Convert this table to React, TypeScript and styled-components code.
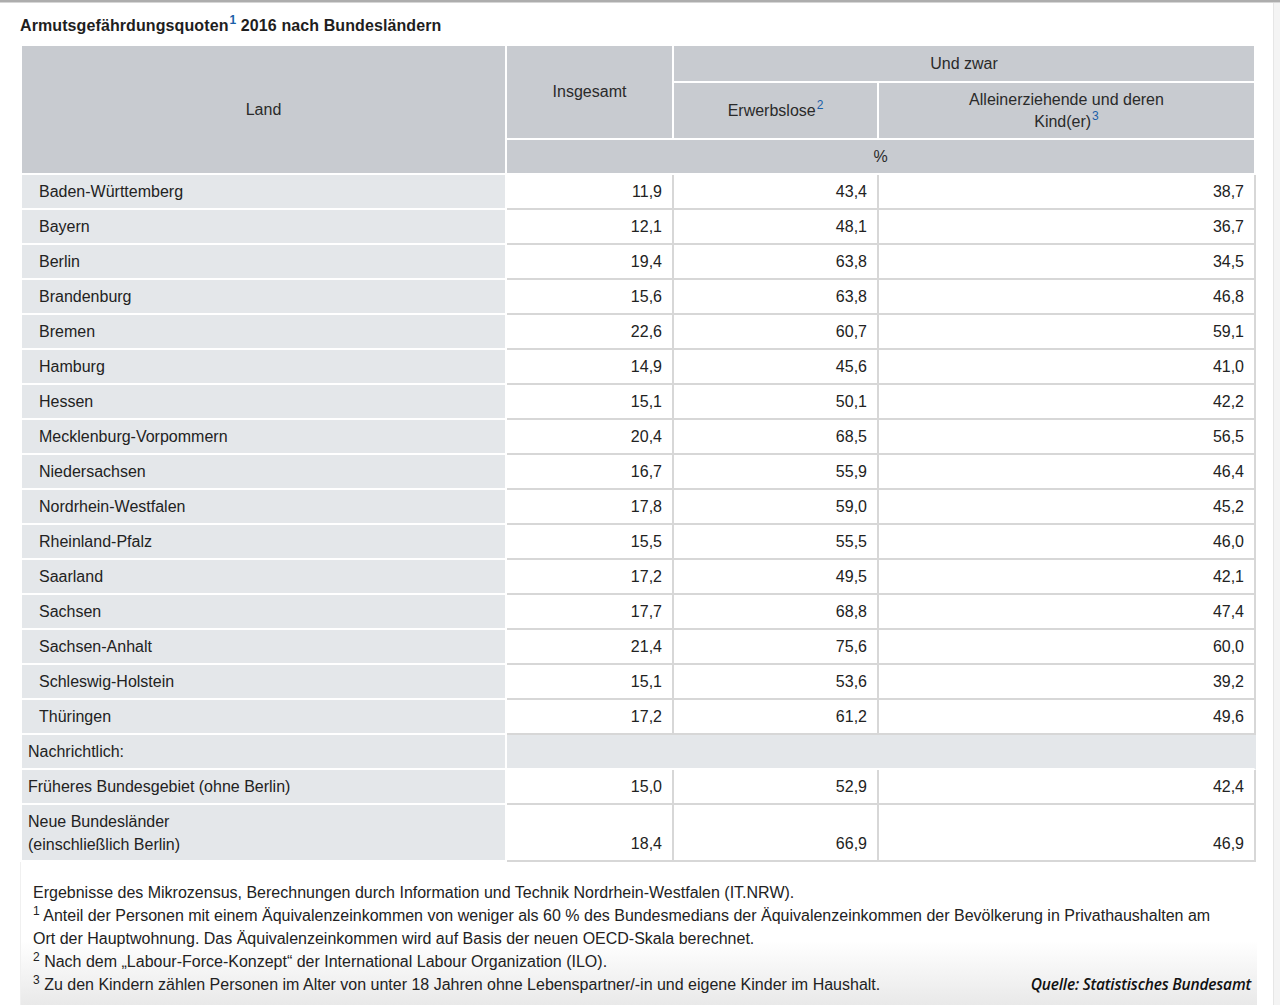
import React from "react";
import styled, { createGlobalStyle } from "styled-components";

const Global = createGlobalStyle`
  html, body { margin: 0; padding: 0; background: #fff; }
  body { font-family: "Liberation Sans", Arial, sans-serif; color: #222; }
`;

const Page = styled.div`
  display: flex;
  flex-direction: column;
  width: 1280px;
  height: 1005px;
  overflow: hidden;
`;

const TopBar = styled.div`
  height: 2px;
  background: #adadad;
  border-bottom: 1px solid #d6d6d6;
  flex: none;
`;

const Body = styled.div`
  display: flex;
  flex: 1;
  min-height: 0;
`;

const Main = styled.div`
  flex: 1;
  padding-left: 20px;
  display: flex;
  flex-direction: column;
`;

const ScrollStrip = styled.div`
  width: 6px;
  flex: none;
  background: #f4f4f4;
  border-left: 1px solid #e6e6e6;
`;

const Title = styled.h1`
  margin: 13px 0 10px 0;
  font-size: 16px;
  line-height: 20px;
  font-weight: bold;
  letter-spacing: 0.1px;
  color: #1e1e1e;
`;

const Note = styled.sup<{ $link?: boolean; $bold?: boolean }>`
  font-size: 12px;
  line-height: 0;
  vertical-align: ${(p) => (p.$link ? "7px" : "6px")};
  color: ${(p) => (p.$link ? "#1b5fa8" : "#222")};
  font-weight: ${(p) => (p.$bold ? "bold" : "normal")};
  margin-left: ${(p) => (p.$link ? "1px" : "0")};
`;

const Table = styled.table`
  margin-left: 2px;
  border-collapse: separate;
  border-spacing: 0;
  width: 1234px;
  table-layout: fixed;
  font-size: 16px;
`;

const Col = styled.col<{ $w: number }>`
  width: ${(p) => p.$w}px;
`;

const Th = styled.th<{ $h?: number }>`
  background: #c8cbd0;
  color: #2a2a2a;
  font-weight: normal;
  text-align: center;
  vertical-align: middle;
  border-right: 2px solid #fff;
  border-bottom: 2px solid #fff;
  padding: 0 10px;
  line-height: 22px;
  ${(p) => (p.$h ? `height: ${p.$h}px;` : "")}
`;

const LandCell = styled.td<{ $pad?: number; $h?: number }>`
  background: #e4e7ea;
  border-right: 2px solid #fff;
  border-bottom: 2px solid #fff;
  padding: 0 8px 0 ${(p) => p.$pad ?? 17}px;
  height: ${(p) => p.$h ?? 33}px;
  line-height: 23px;
  vertical-align: middle;
  color: #222;
`;

const WideCell = styled.td`
  background: #e4e7ea;
  border-right: 2px solid #e4e7ea;
  border-bottom: 2px solid #fff;
`;

const NumCell = styled.td<{ $bottom?: boolean }>`
  background: #fff;
  border-right: 2px solid #d7d7d7;
  border-bottom: 2px solid #d7d7d7;
  text-align: right;
  padding: 0 10px 0 0;
  vertical-align: ${(p) => (p.$bottom ? "bottom" : "middle")};
  line-height: 23px;
  color: #222;
  ${(p) => (p.$bottom ? "padding-bottom: 5px;" : "")}
`;

const Footer = styled.div`
  width: 1224px;
  flex: 1;
  padding: 19px 0 0 12px;
  border-left: 1px solid #f0f0f0;
  background: linear-gradient(to bottom, #ffffff 0%, #ffffff 55%, #e9e9e9 100%);
  font-size: 16px;
  line-height: 23px;
  color: #222;
`;

const FootLine = styled.div`
  white-space: nowrap;
`;

const LastLine = styled.div`
  display: flex;
  justify-content: space-between;
  align-items: baseline;
  padding-right: 6px;
`;

const Source = styled.span`
  font-family: "Open Sans", sans-serif;
  font-style: italic;
  font-weight: 600;
  font-size: 15.5px;
  letter-spacing: -0.2px;
  color: #111;
`;

type Row = [string, string, string, string];

const rows: Row[] = [
  ["Baden-Württemberg", "11,9", "43,4", "38,7"],
  ["Bayern", "12,1", "48,1", "36,7"],
  ["Berlin", "19,4", "63,8", "34,5"],
  ["Brandenburg", "15,6", "63,8", "46,8"],
  ["Bremen", "22,6", "60,7", "59,1"],
  ["Hamburg", "14,9", "45,6", "41,0"],
  ["Hessen", "15,1", "50,1", "42,2"],
  ["Mecklenburg-Vorpommern", "20,4", "68,5", "56,5"],
  ["Niedersachsen", "16,7", "55,9", "46,4"],
  ["Nordrhein-Westfalen", "17,8", "59,0", "45,2"],
  ["Rheinland-Pfalz", "15,5", "55,5", "46,0"],
  ["Saarland", "17,2", "49,5", "42,1"],
  ["Sachsen", "17,7", "68,8", "47,4"],
  ["Sachsen-Anhalt", "21,4", "75,6", "60,0"],
  ["Schleswig-Holstein", "15,1", "53,6", "39,2"],
  ["Thüringen", "17,2", "61,2", "49,6"],
];

export default function App() {
  return (
    <Page>
      <Global />
      <TopBar />
      <Body>
        <Main>
          <Title>
            Armutsgefährdungsquoten<Note $link $bold>1</Note> 2016 nach Bundesländern
          </Title>
          <Table>
            <colgroup>
              <Col $w={485} />
              <Col $w={167} />
              <Col $w={205} />
              <Col $w={377} />
            </colgroup>
            <thead>
              <tr>
                <Th rowSpan={3}>Land</Th>
                <Th rowSpan={2}>Insgesamt</Th>
                <Th colSpan={2} $h={35}>
                  Und zwar
                </Th>
              </tr>
              <tr>
                <Th $h={55}>
                  Erwerbslose<Note $link>2</Note>
                </Th>
                <Th $h={55}>
                  Alleinerziehende und deren
                  <br />
                  Kind(er)<Note $link>3</Note>
                </Th>
              </tr>
              <tr>
                <Th colSpan={3} $h={33}>
                  %
                </Th>
              </tr>
            </thead>
            <tbody>
              {rows.map((r) => (
                <tr key={r[0]}>
                  <LandCell>{r[0]}</LandCell>
                  <NumCell>{r[1]}</NumCell>
                  <NumCell>{r[2]}</NumCell>
                  <NumCell>{r[3]}</NumCell>
                </tr>
              ))}
              <tr>
                <LandCell $pad={6}>Nachrichtlich:</LandCell>
                <WideCell colSpan={3} />
              </tr>
              <tr>
                <LandCell $pad={6}>Früheres Bundesgebiet (ohne Berlin)</LandCell>
                <NumCell>15,0</NumCell>
                <NumCell>52,9</NumCell>
                <NumCell>42,4</NumCell>
              </tr>
              <tr>
                <LandCell $pad={6} $h={55}>
                  Neue Bundesländer
                  <br />
                  (einschließlich Berlin)
                </LandCell>
                <NumCell $bottom>18,4</NumCell>
                <NumCell $bottom>66,9</NumCell>
                <NumCell $bottom>46,9</NumCell>
              </tr>
            </tbody>
          </Table>
          <Footer>
            <FootLine>
              Ergebnisse des Mikrozensus, Berechnungen durch Information und Technik Nordrhein-Westfalen (IT.NRW).
            </FootLine>
            <FootLine>
              <Note>1</Note> Anteil der Personen mit einem Äquivalenzeinkommen von weniger als 60 % des Bundesmedians der
              Äquivalenzeinkommen der Bevölkerung in Privathaushalten am
            </FootLine>
            <FootLine>
              Ort der Hauptwohnung. Das Äquivalenzeinkommen wird auf Basis der neuen OECD-Skala berechnet.
            </FootLine>
            <FootLine>
              <Note>2</Note> Nach dem „Labour-Force-Konzept“ der International Labour Organization (ILO).
            </FootLine>
            <LastLine>
              <span>
                <Note>3</Note> Zu den Kindern zählen Personen im Alter von unter 18 Jahren ohne Lebenspartner/-in und
                eigene Kinder im Haushalt.
              </span>
              <Source>Quelle: Statistisches Bundesamt</Source>
            </LastLine>
          </Footer>
        </Main>
        <ScrollStrip />
      </Body>
    </Page>
  );
}
